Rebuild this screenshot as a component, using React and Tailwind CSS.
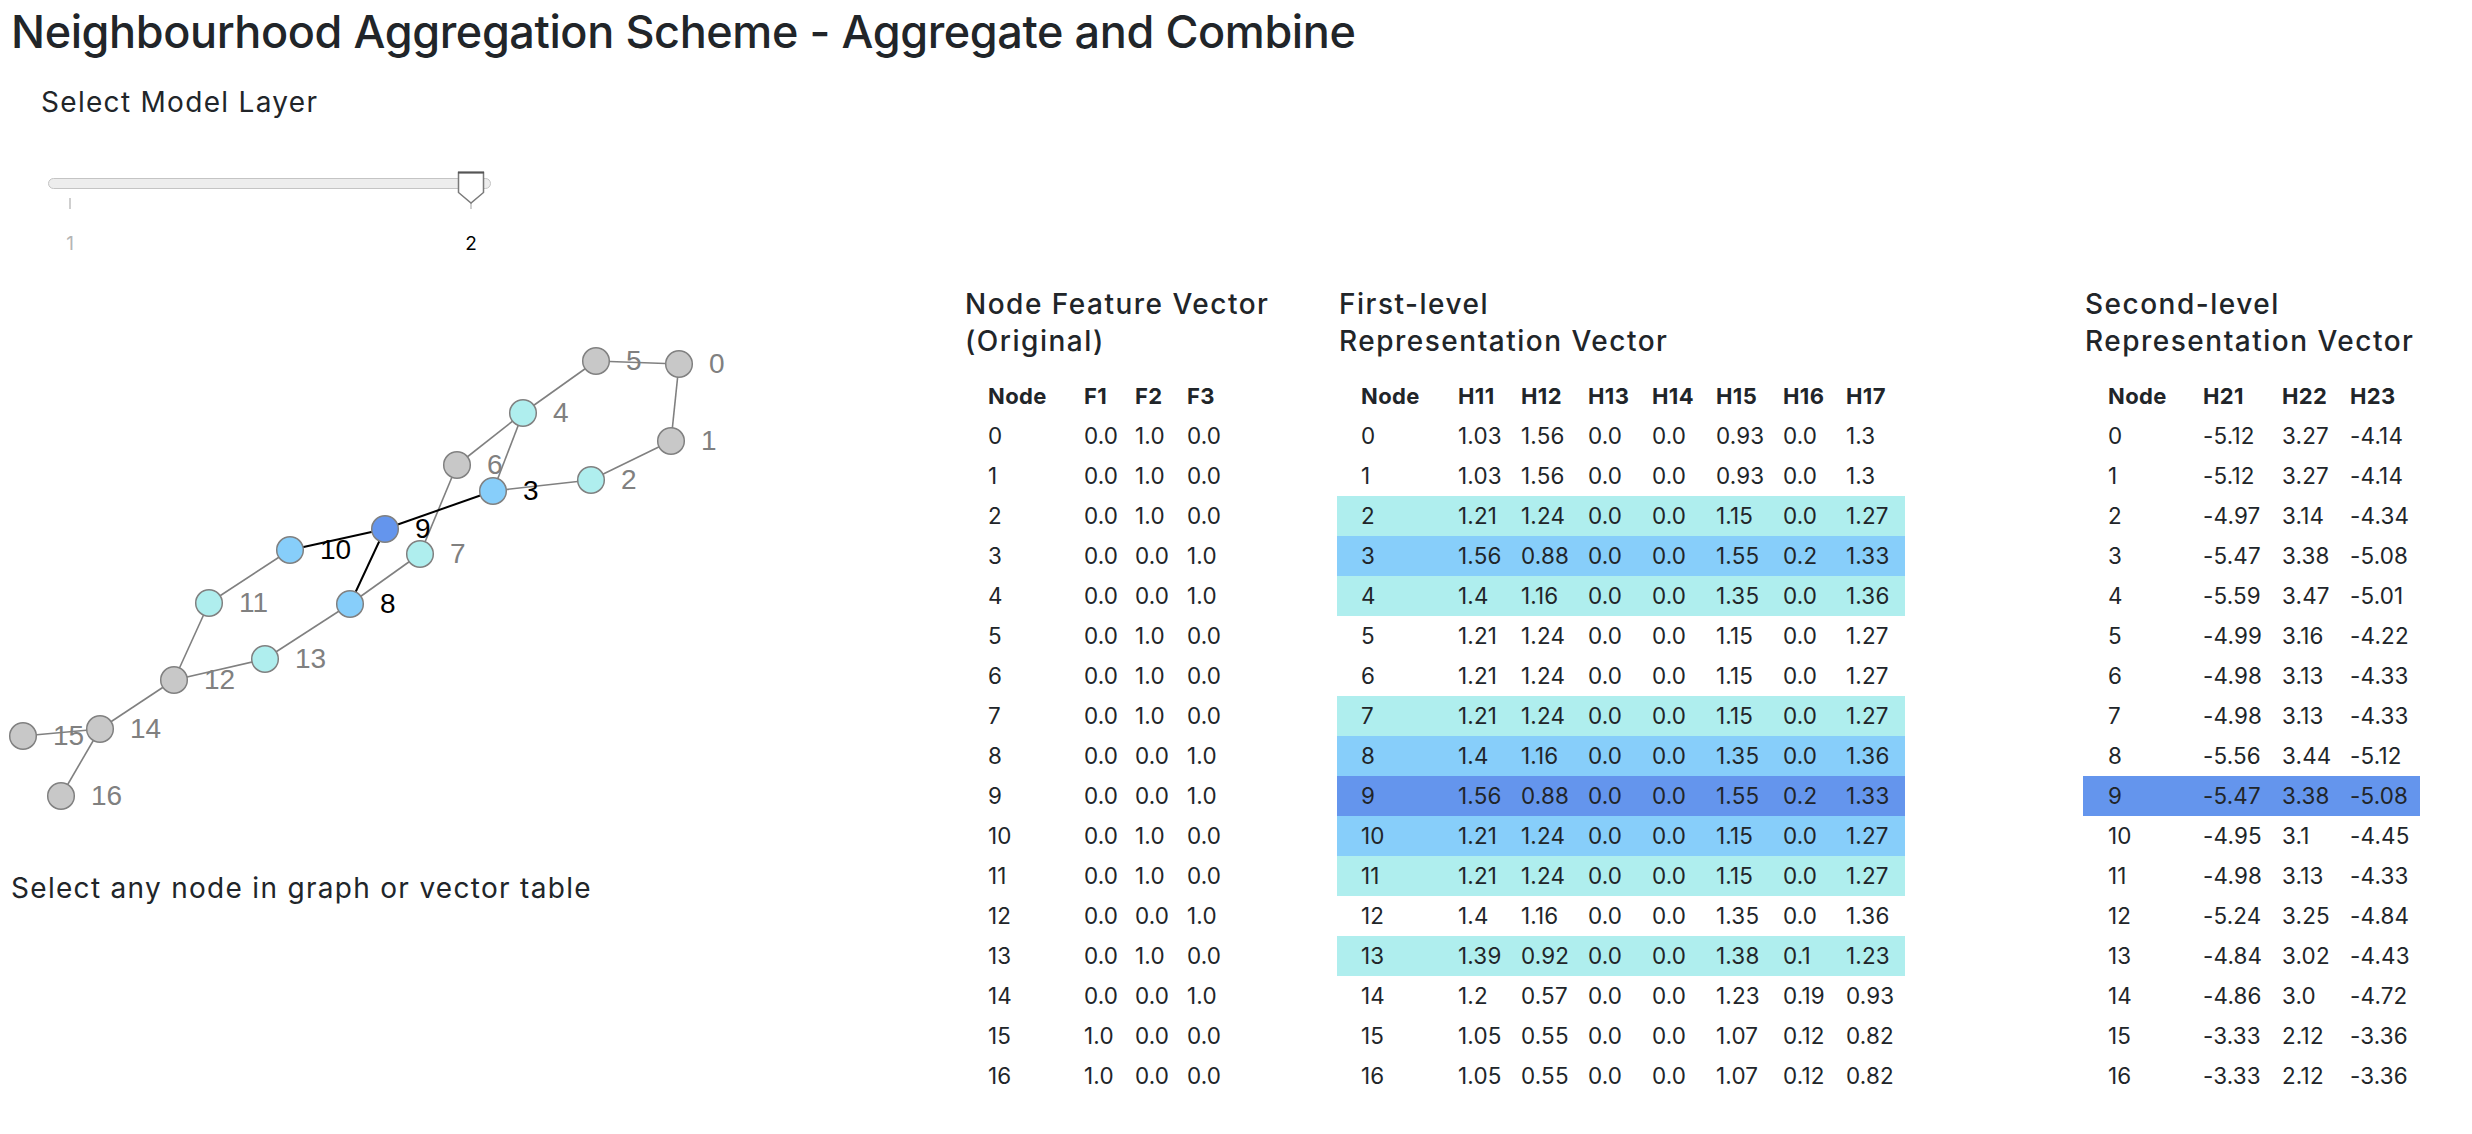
const PALE = "#AFEEEE";
const SKY = "#87CEFA";
const CORN = "#6495ED";

const nodePos = {
  0: [679, 364],
  1: [671, 441],
  2: [591, 480],
  3: [493, 491],
  4: [523, 413],
  5: [596, 361],
  6: [457, 465],
  7: [420, 554],
  8: [350, 604],
  9: [385, 529],
  10: [290, 550],
  11: [209, 603],
  12: [174, 680],
  13: [265, 659],
  14: [100, 729],
  15: [23, 736],
  16: [61, 796],
};

const nodeFill = {
  9: CORN,
  3: SKY,
  8: SKY,
  10: SKY,
  2: PALE,
  4: PALE,
  7: PALE,
  11: PALE,
  13: PALE,
};

const edges = [
  [5, 0, false],
  [0, 1, false],
  [1, 2, false],
  [2, 3, false],
  [5, 4, false],
  [4, 6, false],
  [4, 3, false],
  [6, 7, false],
  [7, 8, false],
  [10, 11, false],
  [11, 12, false],
  [8, 13, false],
  [13, 12, false],
  [12, 14, false],
  [14, 15, false],
  [14, 16, false],
  [9, 3, true],
  [9, 10, true],
  [9, 8, true],
];

const darkLabels = new Set([3, 8, 9, 10]);
const OFF = 290;

function Graph() {
  const ids = Object.keys(nodePos).map(Number);
  return (
    <svg width="760" height="560" className="mt-[31px] block">
      {edges.map(([a, b, dark], i) => (
        <line
          key={i}
          x1={nodePos[a][0]}
          y1={nodePos[a][1] - OFF}
          x2={nodePos[b][0]}
          y2={nodePos[b][1] - OFF}
          stroke={dark ? "#000000" : "#808080"}
          strokeWidth={dark ? 2 : 1.6}
        />
      ))}
      {ids.map((id) => (
        <circle
          key={id}
          cx={nodePos[id][0]}
          cy={nodePos[id][1] - OFF}
          r={13.3}
          fill={nodeFill[id] || "#c8c8c8"}
          stroke="#808080"
          strokeWidth={1.5}
        />
      ))}
      {ids.map((id) => (
        <text
          key={"t" + id}
          x={nodePos[id][0] + 30}
          y={nodePos[id][1] - OFF - 1}
          dominantBaseline="central"
          fontFamily="'Liberation Sans', Arial, sans-serif"
          fontSize="28"
          fill={darkLabels.has(id) ? "#000000" : "#808080"}
        >
          {id}
        </text>
      ))}
    </svg>
  );
}

function Slider() {
  return (
    <div className="relative h-[140px] w-[520px]">
      <div className="absolute left-[48px] top-[59px] h-[11px] w-[443px] rounded-full border border-[#c4c4c4] bg-[#ededed]" />
      <div className="absolute left-[69px] top-[79px] h-[11px] w-[2px] bg-[#cfcfcf]" />
      <div className="absolute left-[470px] top-[79px] h-[11px] w-[2px] bg-[#cfcfcf]" />
      <svg className="absolute left-[457px] top-[52px]" width="28" height="34">
        <polygon
          points="1.5,1.5 26.5,1.5 26.5,21.5 14,32 1.5,21.5"
          fill="#ffffff"
          stroke="#7a7a7a"
          strokeWidth="1.5"
        />
        <line x1="1" y1="1.5" x2="27" y2="1.5" stroke="#555555" strokeWidth="2" />
      </svg>
      <span className="absolute left-[70px] top-[113px] -translate-x-1/2 text-[19px] leading-[24px] text-[#b5b5b5]">
        1
      </span>
      <span className="absolute left-[471px] top-[113px] -translate-x-1/2 text-[19px] leading-[24px] text-black">
        2
      </span>
    </div>
  );
}

const t1 = [
  ["0.0", "1.0", "0.0"],
  ["0.0", "1.0", "0.0"],
  ["0.0", "1.0", "0.0"],
  ["0.0", "0.0", "1.0"],
  ["0.0", "0.0", "1.0"],
  ["0.0", "1.0", "0.0"],
  ["0.0", "1.0", "0.0"],
  ["0.0", "1.0", "0.0"],
  ["0.0", "0.0", "1.0"],
  ["0.0", "0.0", "1.0"],
  ["0.0", "1.0", "0.0"],
  ["0.0", "1.0", "0.0"],
  ["0.0", "0.0", "1.0"],
  ["0.0", "1.0", "0.0"],
  ["0.0", "0.0", "1.0"],
  ["1.0", "0.0", "0.0"],
  ["1.0", "0.0", "0.0"],
];

const rA = ["1.03", "1.56", "0.0", "0.0", "0.93", "0.0", "1.3"];
const rB = ["1.21", "1.24", "0.0", "0.0", "1.15", "0.0", "1.27"];
const rC = ["1.56", "0.88", "0.0", "0.0", "1.55", "0.2", "1.33"];
const rD = ["1.4", "1.16", "0.0", "0.0", "1.35", "0.0", "1.36"];
const t2 = [
  rA,
  rA,
  rB,
  rC,
  rD,
  rB,
  rB,
  rB,
  rD,
  rC,
  rB,
  rB,
  rD,
  ["1.39", "0.92", "0.0", "0.0", "1.38", "0.1", "1.23"],
  ["1.2", "0.57", "0.0", "0.0", "1.23", "0.19", "0.93"],
  ["1.05", "0.55", "0.0", "0.0", "1.07", "0.12", "0.82"],
  ["1.05", "0.55", "0.0", "0.0", "1.07", "0.12", "0.82"],
];

const t3 = [
  ["-5.12", "3.27", "-4.14"],
  ["-5.12", "3.27", "-4.14"],
  ["-4.97", "3.14", "-4.34"],
  ["-5.47", "3.38", "-5.08"],
  ["-5.59", "3.47", "-5.01"],
  ["-4.99", "3.16", "-4.22"],
  ["-4.98", "3.13", "-4.33"],
  ["-4.98", "3.13", "-4.33"],
  ["-5.56", "3.44", "-5.12"],
  ["-5.47", "3.38", "-5.08"],
  ["-4.95", "3.1", "-4.45"],
  ["-4.98", "3.13", "-4.33"],
  ["-5.24", "3.25", "-4.84"],
  ["-4.84", "3.02", "-4.43"],
  ["-4.86", "3.0", "-4.72"],
  ["-3.33", "2.12", "-3.36"],
  ["-3.33", "2.12", "-3.36"],
];

const hl2 = { 2: PALE, 4: PALE, 7: PALE, 11: PALE, 13: PALE, 3: SKY, 8: SKY, 10: SKY, 9: CORN };
const hl3 = { 9: CORN };

function VectorTable({ line1, line2, headers, widths, rows, highlights, className }) {
  return (
    <div className={"flex shrink-0 flex-col " + className}>
      <div className="whitespace-nowrap pl-[2px] text-[28px] font-medium leading-[37px] tracking-[1.5px]">
        <div>{line1}</div>
        <div>{line2}</div>
      </div>
      <div className="mt-[16px] flex flex-col">
        <div className="flex h-[40px] items-center text-[22px] font-bold tracking-[0.4px]">
          {headers.map((h, i) => (
            <div key={h} className={widths[i]}>
              {h}
            </div>
          ))}
        </div>
        {rows.map((r, ri) => (
          <div
            key={ri}
            className="flex h-[40px] items-center text-[22.4px] tracking-[0.2px]"
            style={highlights[ri] ? { backgroundColor: highlights[ri] } : undefined}
          >
            <div className={widths[0]}>{ri}</div>
            {r.map((v, ci) => (
              <div key={ci} className={widths[ci + 1]}>
                {v}
              </div>
            ))}
          </div>
        ))}
      </div>
    </div>
  );
}

export default function App() {
  return (
    <div className="min-h-[1134px] w-[2472px] bg-white font-['Inter','Noto_Sans',sans-serif] text-[#212529]">
      <h1 className="whitespace-nowrap pl-[11px] pt-[5px] text-[45px] font-medium leading-[54px] tracking-[-0.4px]">
        Neighbourhood Aggregation Scheme - Aggregate and Combine
      </h1>
      <div className="flex">
        <div className="w-[963px] shrink-0">
          <div className="mt-[26px] pl-[41px] text-[28px] leading-[34px] tracking-[1.3px]">Select Model Layer</div>
          <Slider />
          <Graph />
          <div className="mt-[21px] pl-[11px] text-[28px] leading-[34px] tracking-[1.3px]">
            Select any node in graph or vector table
          </div>
        </div>
        <div className="mt-[227px] flex items-start">
          <VectorTable
            className="w-[269px]"
            line1="Node Feature Vector"
            line2="(Original)"
            headers={["Node", "F1", "F2", "F3"]}
            widths={["w-[121px] pl-[25px]", "w-[51px]", "w-[52px]", "w-[45px]"]}
            rows={t1}
            highlights={{}}
          />
          <VectorTable
            className="ml-[105px] w-[568px]"
            line1="First-level"
            line2="Representation Vector"
            headers={["Node", "H11", "H12", "H13", "H14", "H15", "H16", "H17"]}
            widths={[
              "w-[121px] pl-[24px]",
              "w-[63px]",
              "w-[67px]",
              "w-[64px]",
              "w-[64px]",
              "w-[67px]",
              "w-[63px]",
              "w-[59px]",
            ]}
            rows={t2}
            highlights={hl2}
          />
          <VectorTable
            className="ml-[178px] w-[337px]"
            line1="Second-level"
            line2="Representation Vector"
            headers={["Node", "H21", "H22", "H23"]}
            widths={["w-[120px] pl-[25px]", "w-[79px]", "w-[68px]", "w-[70px]"]}
            rows={t3}
            highlights={hl3}
          />
        </div>
      </div>
    </div>
  );
}
